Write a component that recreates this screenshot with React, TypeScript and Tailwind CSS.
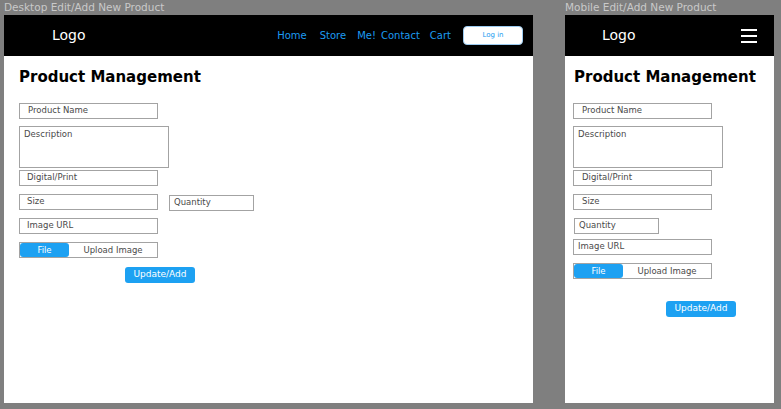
const font = { fontFamily: '"DejaVu Sans", "Liberation Sans", sans-serif' }

function Field({ label, w, pl = 'pl-[7px]', className = '' }: { label: string; w: string; pl?: string; className?: string }) {
  return (
    <div className={`${w} h-[16px] border border-[#a3a3a3] bg-white flex items-center pb-[1px] ${pl} text-[8.5px] text-[#4a4a4a] ${className}`}>
      {label}
    </div>
  )
}

function Desc({ w, className = '' }: { w: string; className?: string }) {
  return (
    <div className={`${w} h-[42px] border border-[#a3a3a3] bg-white pl-[4px] pt-[2px] text-[8.5px] leading-[10px] text-[#4a4a4a] ${className}`}>
      Description
    </div>
  )
}

function Toggle({ className = '' }: { className?: string }) {
  return (
    <div className={`w-[139px] h-[16px] border border-[#a3a3a3] bg-white flex items-center text-[8.5px] ${className}`}>
      <div className="w-[49px] h-full bg-[#1da1f2] rounded-[3px] text-white flex items-center justify-center">File</div>
      <div className="flex-1 text-center text-[#4a4a4a]">Upload Image</div>
    </div>
  )
}

function Button({ className = '' }: { className?: string }) {
  return (
    <div className={`w-[70px] h-[16px] rounded-[3px] bg-[#1da1f2] text-white text-[9px] flex items-center justify-center ${className}`}>
      Update/Add
    </div>
  )
}

function Heading() {
  return <h1 className="text-[15px] leading-[20px] font-bold text-black">Product Management</h1>
}

export default function App() {
  return (
    <div className="w-[781px] h-[409px] bg-[#7f7f7f] flex gap-[32px] pl-[4px] overflow-hidden" style={font}>
      {/* desktop */}
      <div className="flex flex-col w-[529px]">
        <div className="h-[15px] text-[10.5px] leading-[15px] text-[#c9c9c9]">Desktop Edit/Add New Product</div>
        <div className="h-[388px] bg-white flex flex-col">
          <header className="h-[41px] bg-black flex items-center pl-[48px] pr-[10px]">
            <span className="text-white text-[14px]">Logo</span>
            <nav className="ml-auto flex items-center text-[10px] text-[#1d9bf0]">
              <a className="mr-[13px]">Home</a>
              <a className="mr-[11px]">Store</a>
              <a className="mr-[5px]">Me!</a>
              <a className="mr-[10px]">Contact</a>
              <a className="mr-[12px]">Cart</a>
              <button className="w-[60px] h-[19px] bg-white rounded-[4px] border border-[#9ccbf0] text-[7px] text-[#1d9bf0]">Log in</button>
            </nav>
          </header>
          <div className="pl-[15px] flex flex-col items-start">
            <div className="mt-[11px]"><Heading /></div>
            <Field label="Product Name" w="w-[139px]" pl="pl-[8px]" className="mt-[16px]" />
            <Desc w="w-[150px]" className="mt-[7px]" />
            <Field label="Digital/Print" w="w-[139px]" className="mt-[2px]" />
            <div className="flex items-start mt-[8px]">
              <Field label="Size" w="w-[139px]" />
              <Field label="Quantity" w="w-[85px]" pl="pl-[4px]" className="ml-[11px] mt-[1px]" />
            </div>
            <Field label="Image URL" w="w-[139px]" className="mt-[7px]" />
            <Toggle className="mt-[8px]" />
            <Button className="mt-[9px] ml-[106px]" />
          </div>
        </div>
      </div>
      {/* mobile */}
      <div className="flex flex-col w-[209px]">
        <div className="h-[15px] text-[10.5px] leading-[15px] text-[#c9c9c9]">Mobile Edit/Add New Product</div>
        <div className="h-[388px] bg-white flex flex-col">
          <header className="h-[41px] bg-black flex items-center pl-[37px] pr-[17px]">
            <span className="text-white text-[14px]">Logo</span>
            <div className="ml-auto w-[16px] flex flex-col gap-[4px]">
              <span className="block h-[2px] bg-white" />
              <span className="block h-[2px] bg-white" />
              <span className="block h-[2px] bg-white" />
            </div>
          </header>
          <div className="pl-[8px] flex flex-col items-start">
            <div className="mt-[11px] ml-[1px]"><Heading /></div>
            <Field label="Product Name" w="w-[139px]" pl="pl-[8px]" className="mt-[16px]" />
            <Desc w="w-[150px]" className="mt-[7px]" />
            <Field label="Digital/Print" w="w-[139px]" pl="pl-[8px]" className="mt-[2px]" />
            <Field label="Size" w="w-[139px]" pl="pl-[8px]" className="mt-[8px]" />
            <Field label="Quantity" w="w-[85px]" pl="pl-[4px]" className="mt-[8px] ml-[1px]" />
            <Field label="Image URL" w="w-[139px]" pl="pl-[4px]" className="mt-[5px]" />
            <Toggle className="mt-[8px]" />
            <Button className="mt-[22px] ml-[93px]" />
          </div>
        </div>
      </div>
    </div>
  )
}
